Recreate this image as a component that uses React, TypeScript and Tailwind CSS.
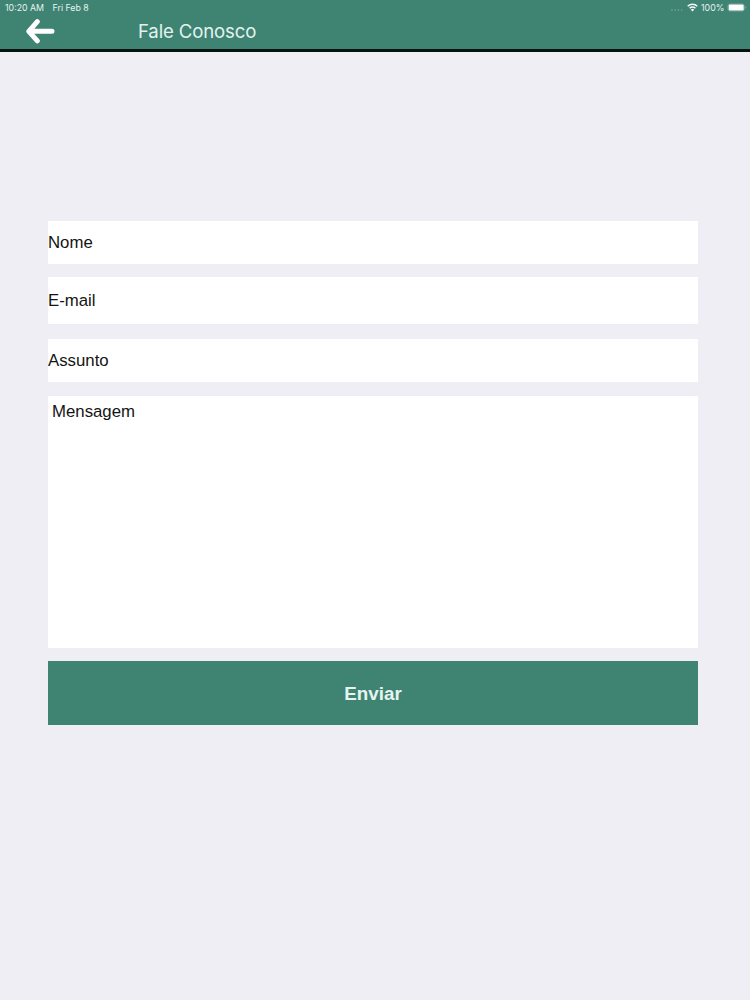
const fields = [
  { label: 'Nome', box: 'h-[43px] pt-px' },
  { label: 'E-mail', box: 'mt-[13px] h-[47px] pt-px' },
  { label: 'Assunto', box: 'mt-[14.5px] h-[43.5px] pt-[2px]' },
];

function StatusBar() {
  return (
    <div className="flex h-[15px] items-center pl-[5px] pr-[3px] font-['Inter','Liberation_Sans',sans-serif] text-[8.8px] leading-[15px] text-[#e6f3ef]">
      <span className="w-[47.5px] whitespace-nowrap">10:20 AM</span>
      <span className="whitespace-nowrap">Fri Feb 8</span>
      <div className="ml-auto flex items-center">
        <svg className="mr-[4px] mt-[4px]" width="12" height="2" viewBox="0 0 12 2" fill="#78aa9d">
          <circle cx="1" cy="1" r="0.8" />
          <circle cx="4.2" cy="1" r="0.8" />
          <circle cx="7.4" cy="1" r="0.8" />
          <circle cx="10.6" cy="1" r="0.8" />
        </svg>
        <svg className="mr-[3.5px]" width="11" height="9" viewBox="0 0 11 9" fill="none" stroke="#f4faf8" strokeWidth="1.5">
          <path d="M0.7 3.3a6.8 6.8 0 0 1 9.6 0" />
          <path d="M2.6 5.3a4.1 4.1 0 0 1 5.8 0" />
          <path d="M5.5 8.4L3.8 6.7a2.4 2.4 0 0 1 3.4 0z" fill="#f4faf8" stroke="none" />
        </svg>
        <span className="w-[26px] whitespace-nowrap">100%</span>
        <svg width="20" height="9" viewBox="0 0 20 9">
          <rect x="0.9" y="0.9" width="16.4" height="7.2" rx="2" fill="none" stroke="#86b5aa" strokeWidth="0.6" />
          <rect x="1.7" y="1.5" width="15" height="6" rx="1.3" fill="#ffffff" />
          <path d="M18.3 3.2v2.6q1-.4 1-1.3t-1-1.3z" fill="#86b5aa" />
        </svg>
      </div>
    </div>
  );
}

export default function App() {
  return (
    <div className="flex h-[1000px] w-[750px] flex-col overflow-hidden bg-[#efeef4] font-['Liberation_Sans',Arial,sans-serif]">
      <header className="h-[52px] shrink-0 border-b-[3px] border-[#061310] bg-[#3f8373]">
        <StatusBar />
        <div className="flex h-[32px] items-center pl-[26px]">
          <button aria-label="Voltar" className="w-[112px]">
            <svg width="29" height="26" viewBox="0 0 29 26" fill="none" stroke="#ffffff" strokeWidth="5" strokeLinecap="round" strokeLinejoin="round">
              <path d="M11.3 3.7L2.8 13.3L11.3 22.8M4 13.3H26" />
            </svg>
          </button>
          <h1 className="whitespace-nowrap font-['Inter','Liberation_Sans',sans-serif] text-[18.6px] leading-[24px] tracking-[-0.15px] text-[#e2f3ee]">Fale Conosco</h1>
        </div>
      </header>
      <form className="ml-[48px] mt-[169px] flex w-[650px] flex-col text-[16.8px] leading-[20px] text-[#141414]">
        {fields.map((f) => (
          <label key={f.label} className={`flex items-center bg-white ${f.box}`}>
            {f.label}
          </label>
        ))}
        <label className="mt-[14px] h-[251.5px] bg-white pl-[4px] pt-[6px]">Mensagem</label>
        <button type="button" className="mt-[13.5px] h-[64px] bg-[#3f8373] pt-[2px] text-[18.8px] font-bold text-[#e6f4f0]">
          Enviar
        </button>
      </form>
    </div>
  );
}
